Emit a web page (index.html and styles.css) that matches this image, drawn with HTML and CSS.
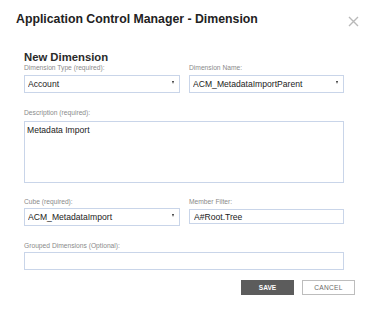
FILE: index.html
```html
<!DOCTYPE html>
<html lang="en">
<head>
    <meta charset="UTF-8">
    <meta name="viewport" content="width=device-width, initial-scale=1.0">
    <title>Application Control Manager - Dimension</title>
    <link rel="stylesheet" href="styles.css">
</head>
<body>

<div class="dialog">
    <div class="dialog-header">
        <h1>Application Control Manager - Dimension</h1>
        <button class="close-button" title="Close">
            <svg width="11" height="11" viewBox="0 0 11 11">
                <path d="M1 1 L10 10 M10 1 L1 10" stroke="#b9b9b9" stroke-width="1.4" fill="none"/>
            </svg>
        </button>
    </div>

    <form class="dimension-form">
        <h2>New Dimension</h2>

        <div class="row">
            <div class="field">
                <label>Dimension Type (required):</label>
                <div class="select-wrap">
                    <select>
                        <option>Account</option>
                        <option>Entity</option>
                        <option>Scenario</option>
                    </select>
                </div>
            </div>
            <div class="field">
                <label>Dimension Name:</label>
                <div class="select-wrap">
                    <select>
                        <option>ACM_MetadataImportParent</option>
                    </select>
                </div>
            </div>
        </div>

        <div class="field description">
            <label>Description (required):</label>
            <textarea>Metadata Import</textarea>
        </div>

        <div class="row cube-row">
            <div class="field">
                <label>Cube (required):</label>
                <div class="select-wrap">
                    <select>
                        <option>ACM_MetadataImport</option>
                    </select>
                </div>
            </div>
            <div class="field">
                <label>Member Filter:</label>
                <input type="text" class="filter-input" value="A#Root.Tree">
            </div>
        </div>

        <div class="field grouped">
            <label>Grouped Dimensions (Optional):</label>
            <input type="text" class="text-input">
        </div>
    </form>

    <div class="actions">
        <button class="save-button">SAVE</button>
        <button class="cancel-button">CANCEL</button>
    </div>
</div>

</body>
</html>
```

FILE: styles.css
```css
body {
    font-family: "Liberation Sans", Arial, sans-serif;
    margin: 0;
    background-color: #fff;
    color: #222;
}

.dialog {
    width: 370px;
    height: 322px;
    padding: 0 11px 0 16px;
    box-sizing: border-box;
}

.dialog-header {
    display: flex;
    justify-content: space-between;
    align-items: flex-start;
    padding-top: 12px;
}

.dialog-header h1 {
    margin: 0;
    font-size: 12.3px;
    line-height: 15px;
    font-weight: bold;
    color: #222;
}

.close-button {
    background: none;
    border: none;
    padding: 0;
    margin-top: 4px;
    width: 11px;
    height: 11px;
    cursor: pointer;
    line-height: 0;
}

.dimension-form {
    width: 320px;
    margin: 24px 0 0 8px;
}

.dimension-form h2 {
    margin: 0;
    font-size: 11.3px;
    line-height: 13px;
    font-weight: bold;
    color: #2a2a2a;
}

.row {
    display: grid;
    grid-template-columns: 156px 155px;
    column-gap: 9px;
}

.field label {
    display: block;
    font-size: 6.7px;
    line-height: 8px;
    color: #8a8a8a;
    margin-bottom: 1px;
}

.select-wrap {
    position: relative;
}

.select-wrap::after {
    content: "";
    position: absolute;
    right: 6px;
    top: 8px;
    border-left: 1.5px solid transparent;
    border-right: 1.5px solid transparent;
    border-top: 3px solid #333;
}

select,
textarea,
input {
    font-family: "Liberation Sans", Arial, sans-serif;
    font-size: 8.6px;
    color: #222;
    background-color: #fff;
    border: 1px solid #c9d5e9;
    border-radius: 0;
    outline: none;
    box-sizing: border-box;
    margin: 0;
}

select {
    appearance: none;
    -webkit-appearance: none;
    width: 100%;
    height: 18px;
    padding: 0 0 0 3px;
}

.description {
    margin-top: 16px;
}

.description label {
    margin-bottom: 4px;
}

textarea {
    display: block;
    width: 100%;
    height: 62px;
    padding: 3px 2px;
    resize: none;
}

.cube-row {
    margin-top: 15px;
}

.cube-row label {
    margin-bottom: 0;
}

.filter-input {
    display: block;
    width: 100%;
    height: 15px;
    margin-top: 3px;
    padding: 0 4px;
}

.grouped {
    margin-top: 16px;
}

.grouped label {
    margin-bottom: 2px;
}

.text-input {
    display: block;
    width: 100%;
    height: 18px;
    padding: 0 3px;
}

.actions {
    display: flex;
    justify-content: flex-end;
    gap: 8px;
    margin-top: 10px;
    padding-right: 4px;
}

.actions button {
    width: 53px;
    height: 15px;
    font-family: "Liberation Sans", Arial, sans-serif;
    font-size: 6.6px;
    padding: 0;
    border-radius: 0;
    cursor: pointer;
}

.save-button {
    background-color: #5c5c5c;
    color: #fff;
    font-weight: bold;
    border: 1px solid #5c5c5c;
}

.cancel-button {
    background-color: #fff;
    color: #6a6a6a;
    border: 1px solid #bdbdbd;
    letter-spacing: 0.3px;
}
```
